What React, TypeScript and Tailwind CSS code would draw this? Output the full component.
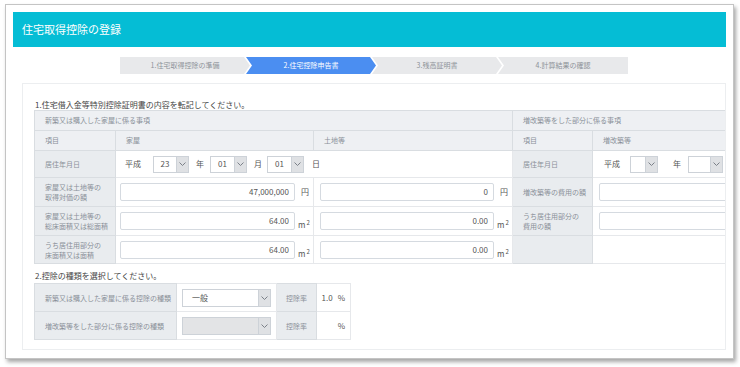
import React from 'react';

const Chevron = () => (
  <svg width="7" height="4" viewBox="0 0 7 4">
    <path d="M0.5 0.5 L3.5 3.5 L6.5 0.5" fill="none" stroke="#7b8088" strokeWidth="1" />
  </svg>
);

function Select({ value, className, disabled, left }: { value?: string; className: string; disabled?: boolean; left?: boolean }) {
  return (
    <div className={`flex h-[17px] border border-[#cdd2d8] ${disabled ? 'bg-[#e3e4e6]' : 'bg-white'} ${className}`}>
      <div className={`flex-1 flex items-center text-[8px] text-[#555] ${left ? 'pl-[9px]' : 'justify-center'}`}>{value}</div>
      <div className="w-[12px] flex items-center justify-center bg-[#dfe1e4] border-l border-[#cdd2d8]">
        <Chevron />
      </div>
    </div>
  );
}

function NumInput({ value, className }: { value?: string; className: string }) {
  return (
    <div className={`h-[18px] border border-[#d5dae0] rounded-[2px] bg-white flex items-center justify-end pr-[5px] text-[8px] text-[#555] ${className}`}>
      {value}
    </div>
  );
}

const M2 = () => (
  <span className="text-[8px] text-[#555]">
    m<sup className="text-[6px] ml-[1px]">2</sup>
  </span>
);

const label = 'p-0 pl-[10px] bg-[#e9ecef] border border-[#d9dde1] text-[7px] leading-[10px] text-[#8a9099]';
const head = 'p-0 pl-[10px] bg-[#eef0f3] border border-[#d9dde1] text-[7px] text-[#8a9099]';
const cell = 'p-0 border border-[#e6e8eb] bg-white';

const steps = [
  { text: '1.住宅取得控除の準備', active: false, first: true },
  { text: '2.住宅控除申告書', active: true },
  { text: '3.残高証明書', active: false },
  { text: '4.計算結果の確認', active: false, last: true },
];

export default function App() {
  return (
    <div className="w-[740px] h-[367px] bg-white pt-[4px] pl-[5px] font-['Noto_Sans_CJK_JP',sans-serif]">
      <div className="w-[729px] h-[355px] border border-[#c4c4c4] bg-white px-[7px] pt-[7px] shadow-[2px_3px_4px_rgba(0,0,0,0.35)]">
        {/* Header */}
        <div className="h-[35px] bg-[#05bdd5] flex items-center pl-[9px]">
          <h1 className="text-[11px] text-white">住宅取得控除の登録</h1>
        </div>

        {/* Steps */}
        <div className="flex mt-[10px] ml-[107px] h-[17px]">
          {steps.map((s, i) => (
            <div
              key={i}
              className={`h-[17px] flex items-center justify-center text-[7px] ${i === 0 ? 'w-[130px]' : 'w-[130px] -ml-[4px]'} ${
                s.active ? 'bg-[#4b8ef1] text-white' : 'bg-[#e8e9eb] text-[#8e9399]'
              } ${
                s.first
                  ? '[clip-path:polygon(0_0,calc(100%-6px)_0,100%_50%,calc(100%-6px)_100%,0_100%)]'
                  : s.last
                  ? '[clip-path:polygon(0_0,100%_0,100%_100%,0_100%,6px_50%)]'
                  : '[clip-path:polygon(0_0,calc(100%-6px)_0,100%_50%,calc(100%-6px)_100%,0_100%,6px_50%)]'
              }`}
            >
              {s.text}
            </div>
          ))}
        </div>

        {/* Content */}
        <div className="mt-[9px] ml-[9px] w-[704px] h-[267px] border border-[#eceef0] overflow-hidden pt-[16px]">
          <p className="ml-[12px] h-[10px] leading-[10px] text-[8px] text-[#444]">1.住宅借入金等特別控除証明書の内容を転記してください。</p>
          <table className="ml-[11px] table-fixed border-collapse w-[738px]">
            <colgroup>
              <col className="w-[81px]" />
              <col className="w-[198px]" />
              <col className="w-[199px]" />
              <col className="w-[80px]" />
              <col className="w-[180px]" />
            </colgroup>
            <tbody>
              <tr className="h-[20px]">
                <td colSpan={3} className={head}>新築又は購入した家屋に係る事項</td>
                <td colSpan={2} className={head}>増改築等をした部分に係る事項</td>
              </tr>
              <tr className="h-[20px]">
                <td className={head}>項目</td>
                <td className={head}>家屋</td>
                <td className={head}>土地等</td>
                <td className={head}>項目</td>
                <td className={head}>増改築等</td>
              </tr>
              <tr className="h-[27px]">
                <td className={label}>居住年月日</td>
                <td colSpan={2} className={cell}>
                  <div className="flex items-center pl-[9px] text-[8px] text-[#555]">
                    <span>平成</span>
                    <Select value="23" className="w-[36px] ml-[12px]" />
                    <span className="ml-[7px]">年</span>
                    <Select value="01" className="w-[37px] ml-[6px]" />
                    <span className="ml-[7px]">月</span>
                    <Select value="01" className="w-[37px] ml-[5px]" />
                    <span className="ml-[8px]">日</span>
                  </div>
                </td>
                <td className={label}>居住年月日</td>
                <td className={cell}>
                  <div className="flex items-center pl-[11px] text-[8px] text-[#555]">
                    <span>平成</span>
                    <Select className="w-[28px] ml-[10px]" />
                    <span className="ml-[15px]">年</span>
                    <Select className="w-[35px] ml-[7px]" />
                  </div>
                </td>
              </tr>
              <tr className="h-[29px]">
                <td className={label}>家屋又は土地等の<br />取得対価の額</td>
                <td className={cell}>
                  <div className="flex items-center pl-[4px]">
                    <NumInput value="47,000,000" className="w-[175px]" />
                    <span className="ml-[6px] text-[8px] text-[#555]">円</span>
                  </div>
                </td>
                <td className={cell}>
                  <div className="flex items-center pl-[6px]">
                    <NumInput value="0" className="w-[174px]" />
                    <span className="ml-[6px] text-[8px] text-[#555]">円</span>
                  </div>
                </td>
                <td className={label}>増改築等の費用の額</td>
                <td className={cell}>
                  <div className="flex items-center pl-[6px]">
                    <NumInput className="w-[170px]" />
                  </div>
                </td>
              </tr>
              <tr className="h-[29px]">
                <td className={label}>家屋又は土地等の<br />総床面積又は総面積</td>
                <td className={cell}>
                  <div className="flex items-center pl-[4px]">
                    <NumInput value="64.00" className="w-[175px]" />
                    <span className="ml-[3px]"><M2 /></span>
                  </div>
                </td>
                <td className={cell}>
                  <div className="flex items-center pl-[6px]">
                    <NumInput value="0.00" className="w-[174px]" />
                    <span className="ml-[3px]"><M2 /></span>
                  </div>
                </td>
                <td className={label}>うち居住用部分の<br />費用の額</td>
                <td className={cell}>
                  <div className="flex items-center pl-[6px]">
                    <NumInput className="w-[170px]" />
                  </div>
                </td>
              </tr>
              <tr className="h-[28px]">
                <td className={label}>うち居住用部分の<br />床面積又は面積</td>
                <td className={cell}>
                  <div className="flex items-center pl-[4px]">
                    <NumInput value="64.00" className="w-[175px]" />
                    <span className="ml-[3px]"><M2 /></span>
                  </div>
                </td>
                <td className={cell}>
                  <div className="flex items-center pl-[6px]">
                    <NumInput value="0.00" className="w-[174px]" />
                    <span className="ml-[3px]"><M2 /></span>
                  </div>
                </td>
                <td className={label}></td>
                <td className={cell}></td>
              </tr>
            </tbody>
          </table>

          <p className="ml-[12px] mt-[7px] mb-[2px] h-[10px] leading-[10px] text-[8px] text-[#444]">2.控除の種類を選択してください。</p>
          <table className="ml-[11px] table-fixed border-collapse w-[316px]">
            <colgroup>
              <col className="w-[142px]" />
              <col className="w-[100px]" />
              <col className="w-[40px]" />
              <col className="w-[34px]" />
            </colgroup>
            <tbody>
              <tr className="h-[28px]">
                <td className={label}>新築又は購入した家屋に係る控除の種類</td>
                <td className={cell}>
                  <div className="pl-[5px]">
                    <Select value="一般" left className="w-[89px] h-[18px]" />
                  </div>
                </td>
                <td className={`${label} !pl-0 text-center`}>控除率</td>
                <td className={cell}>
                  <div className="flex justify-end pr-[5px] text-[8px] text-[#555]">
                    <span>1.0</span>
                    <span className="ml-[5px]">%</span>
                  </div>
                </td>
              </tr>
              <tr className="h-[28px]">
                <td className={label}>増改築等をした部分に係る控除の種類</td>
                <td className={cell}>
                  <div className="pl-[5px]">
                    <Select disabled className="w-[89px] h-[18px]" />
                  </div>
                </td>
                <td className={`${label} !pl-0 text-center`}>控除率</td>
                <td className={cell}>
                  <div className="flex justify-end pr-[5px] text-[8px] text-[#555]">
                    <span>%</span>
                  </div>
                </td>
              </tr>
            </tbody>
          </table>
        </div>
      </div>
    </div>
  );
}
